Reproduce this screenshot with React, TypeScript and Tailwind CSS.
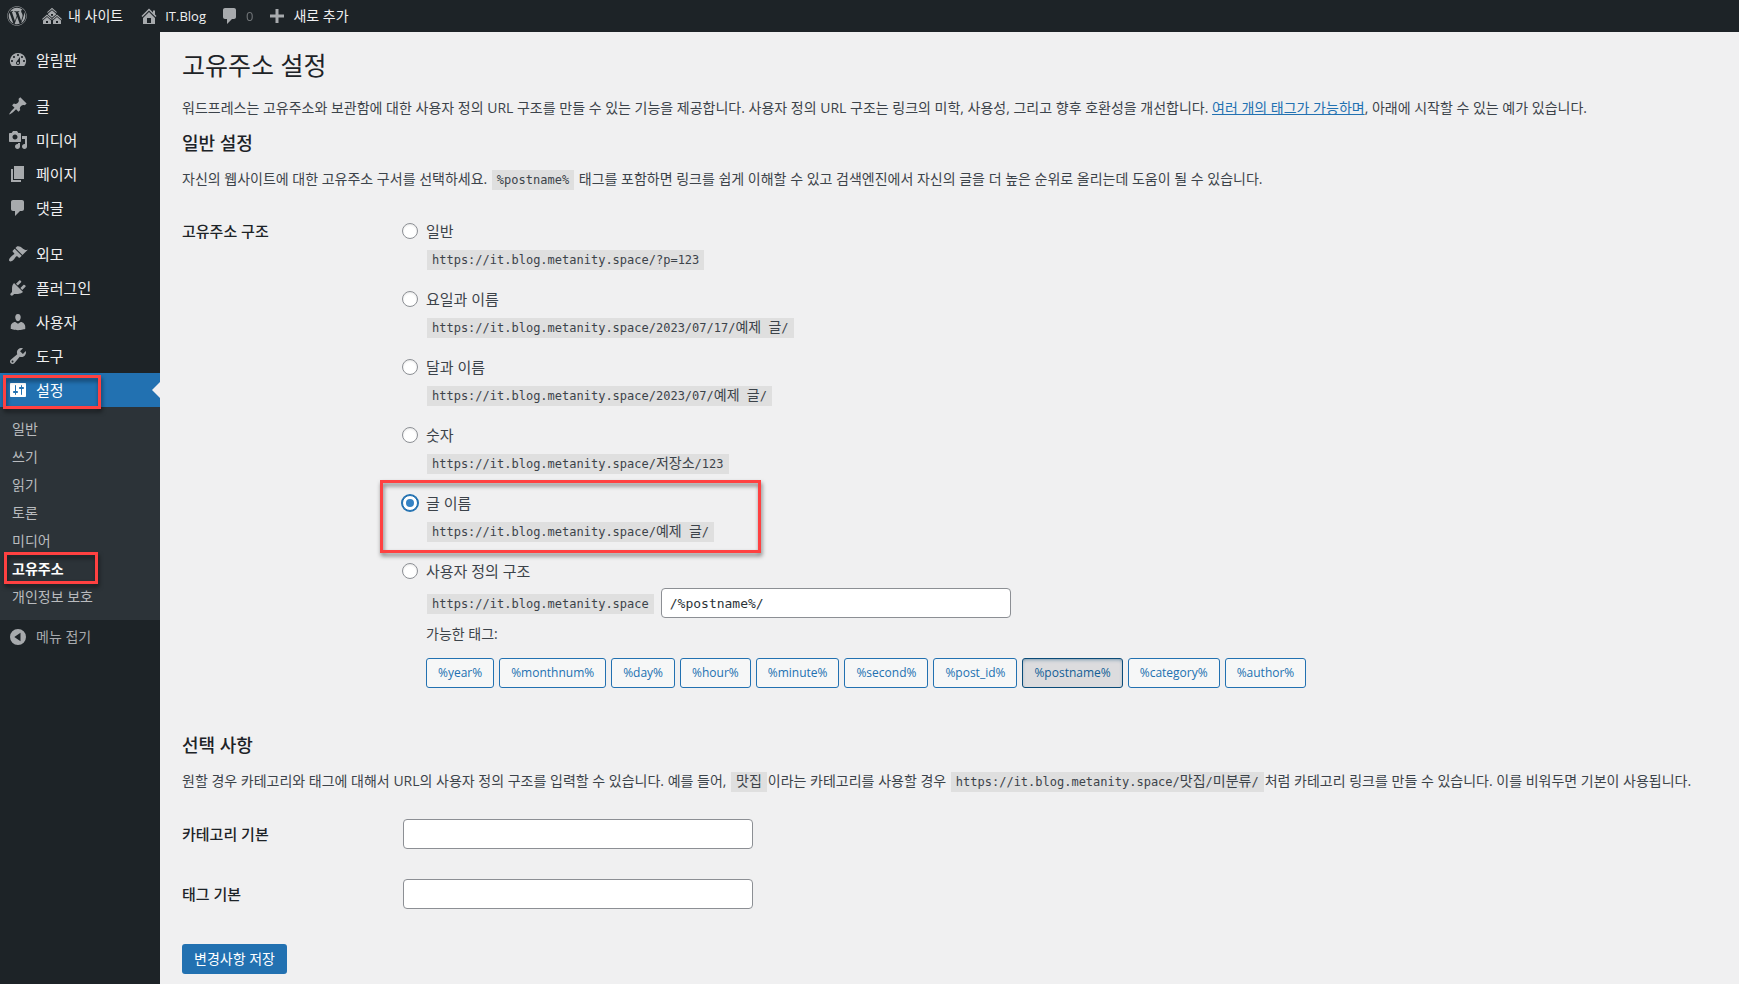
import React from "react";
import { FaWordpress } from "react-icons/fa";

const icons = {
  dashboard:
    "M3.76 16h12.48A7.998 7.998 0 0 0 10 3a7.998 7.998 0 0 0-6.24 13zM10 4c.55 0 1 .45 1 1s-.45 1-1 1-1-.45-1-1 .45-1 1-1zM6 6c.55 0 1 .45 1 1s-.45 1-1 1-1-.45-1-1 .45-1 1-1zm8 0c.55 0 1 .45 1 1s-.45 1-1 1-1-.45-1-1 .45-1 1-1zm-5.37 5.55L12 7v6c0 1.1-.9 2-2 2s-2-.9-2-2c0-.57.24-1.08.63-1.45zM4 10c.55 0 1 .45 1 1s-.45 1-1 1-1-.45-1-1 .45-1 1-1zm12 0c.55 0 1 .45 1 1s-.45 1-1 1-1-.45-1-1 .45-1 1-1zm-5 3c0-.55-.45-1-1-1s-1 .45-1 1 .45 1 1 1 1-.45 1-1z",
  post: "M10.44 3.02l1.82-1.82 6.36 6.35-1.83 1.82c-1.05-.68-2.48-.57-3.41.36l-.75.75c-.92.93-1.04 2.35-.35 3.41l-1.83 1.82-2.41-2.41-2.8 2.79c-.42.42-3.38 2.71-3.8 2.29s1.86-3.39 2.28-3.81l2.79-2.79L4.1 9.36l1.83-1.82c1.05.69 2.48.57 3.4-.36l.75-.75c.93-.92 1.05-2.35.36-3.41z",
  media:
    "M13 11V4c0-.55-.45-1-1-1h-1.67L9 1H5L3.67 3H2c-.55 0-1 .45-1 1v7c0 .55.45 1 1 1h10c.55 0 1-.45 1-1zM7 4.5c1.38 0 2.5 1.12 2.5 2.5S8.38 9.5 7 9.5 4.5 8.38 4.5 7 5.62 4.5 7 4.5zM14 6h5v10.5c0 1.38-1.12 2.5-2.5 2.5S14 17.88 14 16.5s1.12-2.5 2.5-2.5c.17 0 .34.02.5.05V9h-3V6zm-4 8.05V13h2v3.5c0 1.38-1.12 2.5-2.5 2.5S7 17.88 7 16.5 8.12 14 9.5 14c.17 0 .34.02.5.05z",
  page: "M6 15V2h10v13H6zm-1 1h8v2H3V5h2v11z",
  comments:
    "M5 2h9c1.1 0 2 .9 2 2v7c0 1.1-.9 2-2 2h-2l-5 5v-5H5c-1.1 0-2-.9-2-2V4c0-1.1.9-2 2-2z",
  appearance:
    "M14.48 11.06L7.41 3.99l1.5-1.5c.5-.56 2.3-.47 3.51.32 1.21.8 1.43 1.28 2.91 2.1 1.18.64 2.45 1.26 4.45.85zm-.71.71L6.7 4.7 4.93 6.47c-.39.39-.39 1.02 0 1.41l1.06 1.06c.39.39.39 1.03 0 1.42-.6.6-1.43 1.11-2.21 1.69-.35.26-.7.53-1.01.84C1.43 14.23.4 16.08 1.4 17.07c.99 1 2.84-.03 4.18-1.36.31-.31.58-.66.85-1.02.57-.78 1.08-1.61 1.69-2.21.39-.39 1.02-.39 1.41 0l1.06 1.06c.39.39 1.02.39 1.41 0z",
  plugins:
    "M13.11 4.36L9.87 7.6 8 5.73l3.24-3.24c.35-.34 1.05-.2 1.56.32.52.51.66 1.21.31 1.55zm-8 1.77l.91-1.12 9.01 9.01-1.19.84c-.71.71-2.63 1.16-3.82 1.16H6.14L4.9 17.26c-.59.59-1.54.59-2.12 0-.59-.58-.59-1.53 0-2.12l1.24-1.24v-3.88c0-1.13.4-3.19 1.09-3.89zm7.26 3.97l3.24-3.24c.34-.35 1.04-.21 1.55.31.52.51.66 1.21.31 1.55l-3.24 3.25z",
  users:
    "M10 9.25c-2.27 0-2.73-3.44-2.73-3.44C7 4.02 7.82 2 9.97 2c2.16 0 2.98 2.02 2.71 3.81 0 0-.41 3.44-2.68 3.44zm0 2.57L12.72 10c2.39 0 4.52 2.33 4.52 4.53v2.49s-3.65 1.13-7.24 1.13c-3.65 0-7.24-1.13-7.24-1.13v-2.49c0-2.25 1.94-4.48 4.47-4.48z",
  tools:
    "M16.68 9.77c-1.34 1.34-3.3 1.67-4.95.99l-5.41 6.52c-.99.99-2.59.99-3.58 0s-.99-2.59 0-3.57l6.52-5.42c-.68-1.65-.35-3.61.99-4.95 1.28-1.28 3.12-1.62 4.72-1.06l-2.89 2.89 2.82 2.82 2.86-2.87c.53 1.58.18 3.39-1.08 4.65zM3.81 16.21c.4.39 1.04.39 1.43 0 .4-.4.4-1.04 0-1.43-.39-.4-1.03-.4-1.43 0-.39.39-.39 1.03 0 1.43z",
  settings:
    "M18 16V4c0-.55-.45-1-1-1H3c-.55 0-1 .45-1 1v12c0 .55.45 1 1 1h14c.55 0 1-.45 1-1zM8 11h1c.55 0 1 .45 1 1s-.45 1-1 1H8v1.5c0 .28-.22.5-.5.5s-.5-.22-.5-.5V13H6c-.55 0-1-.45-1-1s.45-1 1-1h1V5.5c0-.28.22-.5.5-.5s.5.22.5.5V11zm5-2h-1c-.55 0-1-.45-1-1s.45-1 1-1h1V5.5c0-.28.22-.5.5-.5s.5.22.5.5V7h1c.55 0 1 .45 1 1s-.45 1-1 1h-1v5.5c0 .28-.22.5-.5.5s-.5-.22-.5-.5V9z",
  home: "M16 8.5l1.53 1.53-1.06 1.06L10 4.6l-6.47 6.49-1.06-1.06L10 2.5l4 4v-2h2v4zm-6-2.46l6 5.99V18H4v-5.97zM12 17v-5H8v5h4z",
  multisite:
    "M14.27 6.87L10 3.14 5.73 6.87 5 6.14l5-4.38 5 4.38zM14 8.42l-4.05 3.43L6 8.38v-.74l4-3.5 4 3.5v.78zM11 9.7V8H9v1.7h2zm-1.73 4.03L5 10 .73 13.73 0 13l5-4.38L10 13zm10 0L15 10l-4.27 3.73L10 13l5-4.38L20 13zM5 11l4 3.5V18H1v-3.5zm10 0l4 3.5V18h-8v-3.5zm-9 6v-2H4v2h2zm10 0v-2h-2v2h2z",
  plus: "M17 8.5v3h-5.5V17h-3v-5.5H3v-3h5.5V3h3v5.5H17z",
  collapse:
    "M10 2a8 8 0 1 0 0 16a8 8 0 1 0 0-16zM12.5 5.8v8.4L6.3 10z",
};

type IconName = keyof typeof icons;

const Icon = ({ name, className = "" }: { name: IconName; className?: string }) => (
  <svg viewBox="0 0 20 20" className={`h-5 w-5 shrink-0 fill-current ${className}`} aria-hidden="true">
    <path fillRule="evenodd" d={icons[name]} />
  </svg>
);

const menuGroups: { icon: IconName; label: string }[][] = [
  [{ icon: "dashboard", label: "알림판" }],
  [
    { icon: "post", label: "글" },
    { icon: "media", label: "미디어" },
    { icon: "page", label: "페이지" },
    { icon: "comments", label: "댓글" },
  ],
  [
    { icon: "appearance", label: "외모" },
    { icon: "plugins", label: "플러그인" },
    { icon: "users", label: "사용자" },
    { icon: "tools", label: "도구" },
    { icon: "settings", label: "설정" },
  ],
];

const submenu = ["일반", "쓰기", "읽기", "토론", "미디어", "고유주소", "개인정보 보호"];

const structures = [
  { id: "plain", label: "일반", url: "https://it.blog.metanity.space/?p=123" },
  { id: "day", label: "요일과 이름", url: "https://it.blog.metanity.space/2023/07/17/예제 글/" },
  { id: "month", label: "달과 이름", url: "https://it.blog.metanity.space/2023/07/예제 글/" },
  { id: "numeric", label: "숫자", url: "https://it.blog.metanity.space/저장소/123" },
  { id: "postname", label: "글 이름", url: "https://it.blog.metanity.space/예제 글/" },
];

const tags = [
  "%year%",
  "%monthnum%",
  "%day%",
  "%hour%",
  "%minute%",
  "%second%",
  "%post_id%",
  "%postname%",
  "%category%",
  "%author%",
];

const Highlight = ({ className }: { className: string }) => (
  <div
    className={`pointer-events-none absolute border-3 border-[#ff4141] drop-shadow-[1px_3px_2px_rgba(0,0,0,0.5)] ${className}`}
  />
);

// Hangul is set a little larger than the Latin part of a URL
const Code = ({ children }: { children: string }) => (
  <code className="mx-px bg-[#dfdfdf] px-[5px] py-[3px] font-['DejaVu_Sans_Mono','Noto_Sans_CJK_KR',monospace] text-[12px] leading-none">
    {children.split(/([가-힣]+)/).map((part, index) =>
      index % 2 ? (
        <span key={index} className="text-[14px]">
          {part}
        </span>
      ) : (
        part
      )
    )}
  </code>
);

const Radio = ({ id, checked = false }: { id: string; checked?: boolean }) => (
  <input
    type="radio"
    name="structure"
    id={id}
    defaultChecked={checked}
    className="grid h-4 w-4 shrink-0 appearance-none place-content-center rounded-full border border-[#8c8f94] bg-white shadow-[inset_0_1px_2px_rgba(0,0,0,0.1)] before:h-2 before:w-2 before:rounded-full checked:border-[#2271b1] checked:shadow-[0_0_0_1px_#2271b1] checked:before:bg-[#3582c4]"
  />
);

const inputClass =
  "h-[30px] w-[350px] rounded-sm border border-[#8c8f94] bg-white px-2 text-[#2c3338]";

const AdminBar = () => (
  <header className="flex h-8 items-center bg-[#1d2327] pl-[7px] text-[14px] text-[#f0f0f1]">
    <a href="#about" aria-label="WordPress" className="mr-[15px] text-[#a7aaad]">
      <FaWordpress className="h-5 w-5" />
    </a>
    <a href="#sites" className="mr-4 flex items-center gap-[6px]">
      <Icon name="multisite" className="text-[#a7aaad]" />내 사이트
    </a>
    <a href="#blog" className="mr-[14px] flex items-center gap-[6px] text-[13px]">
      <Icon name="home" className="text-[#a7aaad]" />
      IT.Blog
    </a>
    <a href="#comments" className="mr-[14px] flex items-center gap-[6px] text-[13px] text-[#a7aaad]">
      <Icon name="comments" />
      <span className="opacity-60">0</span>
    </a>
    <a href="#new" className="flex items-center gap-[6px]">
      <Icon name="plus" className="text-[#a7aaad]" />
      새로 추가
    </a>
  </header>
);

const Sidebar = () => (
  <nav className="w-40 shrink-0 bg-[#1d2327] pt-[11px] text-[#f0f0f1]">
    <div className="flex flex-col gap-3">
      {menuGroups.map((group, index) => (
        <ul key={index}>
          {group.map(({ icon, label }) => {
            const active = label === "설정";
            return (
              <li key={label} className={active ? "relative bg-[#2271b1] text-white" : ""}>
                <a href={`#${icon}`} className="flex h-[34px] items-center gap-2 pl-2 text-[15px]">
                  <Icon name={icon} className={active ? "" : "text-[#a7aaad]"} />
                  {label}
                </a>
                {active && (
                  <>
                    <span className="absolute top-1/2 right-0 -mt-2 border-8 border-l-0 border-transparent border-r-[#f0f0f1]" />
                    <Highlight className="top-[2px] left-[3px] h-[34px] w-[98px]" />
                  </>
                )}
              </li>
            );
          })}
        </ul>
      ))}
    </div>
    <ul className="bg-[#2c3338] pt-2 pb-[9px] text-[14px]">
      {submenu.map((label) => {
        const current = label === "고유주소";
        return (
          <li key={label} className="relative">
            <a
              href={`#${label}`}
              className={`flex h-7 items-center pl-3 ${current ? "font-semibold text-white" : "text-[#b9bbbe]"}`}
            >
              {label}
            </a>
            {current && <Highlight className="-top-[3px] left-1 h-8 w-[94px]" />}
          </li>
        );
      })}
    </ul>
    <button type="button" className="flex h-[34px] items-center gap-2 pl-2 text-[14px] text-[#a7aaad]">
      <Icon name="collapse" />
      메뉴 접기
    </button>
  </nav>
);

const App = () => {
  return (
    <div className="flex min-h-screen flex-col bg-[#f0f0f1] font-['Open_Sans','Noto_Sans_CJK_KR',sans-serif] text-[14px] leading-5 text-[#3c434a]">
      <AdminBar />
      <div className="flex grow">
        <Sidebar />
        <main className="min-w-0 grow pt-[17px] pr-5 pb-[10px] pl-[22px]">
          <h1 className="text-[25px] leading-8 text-[#1d2327]">고유주소 설정</h1>
          <p className="mt-[17px]">
            워드프레스는 고유주소와 보관함에 대한 사용자 정의 URL 구조를 만들 수 있는 기능을 제공합니다. 사용자 정의 URL
            구조는 링크의 미학, 사용성, 그리고 향후 호환성을 개선합니다.{" "}
            <a href="#tags" className="text-[#2271b1] underline">
              여러 개의 태그가 가능하며
            </a>
            , 아래에 시작할 수 있는 예가 있습니다.
          </p>
          <h2 className="mt-[13px] text-[18px] leading-6 font-medium text-[#1d2327]">일반 설정</h2>
          <p className="mt-[14px]">
            자신의 웹사이트에 대한 고유주소 구서를 선택하세요. <Code>%postname%</Code> 태그를 포함하면 링크를 쉽게 이해할 수
            있고 검색엔진에서 자신의 글을 더 높은 순위로 올리는데 도움이 될 수 있습니다.
          </p>

          <form onSubmit={(e) => e.preventDefault()}>
            <fieldset className="mt-8 grid grid-cols-[220px_1fr]">
              <div className="text-[15px] font-medium text-[#1d2327]">고유주소 구조</div>
              <div>
                {structures.map(({ id, label, url }) => (
                  <div key={id} className="relative mb-5">
                    <div className="flex items-center gap-2 text-[15px]">
                      <Radio id={id} checked={id === "postname"} />
                      <label htmlFor={id}>{label}</label>
                    </div>
                    <div className="mt-2 pl-6">
                      <Code>{url}</Code>
                    </div>
                    {id === "postname" && <Highlight className="-top-[13px] -left-[22px] h-[73px] w-[381px]" />}
                  </div>
                ))}
                <div className="flex items-center gap-2 text-[15px]">
                  <Radio id="custom" />
                  <label htmlFor="custom">사용자 정의 구조</label>
                </div>
                <div className="pl-6">
                  <div className="mt-[7px] flex items-center gap-[6px]">
                    <span>
                      <Code>https://it.blog.metanity.space</Code>
                    </span>
                    <input
                      type="text"
                      aria-label="사용자 정의 구조"
                      defaultValue="/%postname%/"
                      className={`${inputClass} font-['DejaVu_Sans_Mono',monospace] text-[13px]`}
                    />
                  </div>
                  <p className="mt-[6px]">가능한 태그:</p>
                  <div className="mt-[14px] flex flex-wrap gap-[5px]">
                    {tags.map((tag) => (
                      <button
                        key={tag}
                        type="button"
                        className={`h-[30px] rounded-[3px] border px-[11px] text-[12px] ${
                          tag === "%postname%"
                            ? "border-[#0a4b78] bg-[#dcdcde] text-[#135e96] shadow-[inset_0_2px_5px_-3px_#0a4b78]"
                            : "border-[#2271b1] bg-[#f6f7f7] text-[#2271b1]"
                        }`}
                      >
                        {tag}
                      </button>
                    ))}
                  </div>
                </div>
              </div>
            </fieldset>

            <h2 className="mt-[45px] text-[18px] leading-6 font-medium text-[#1d2327]">선택 사항</h2>
            <p className="mt-[14px]">
              원할 경우 카테고리와 태그에 대해서 URL의 사용자 정의 구조를 입력할 수 있습니다. 예를 들어, <Code>맛집</Code>
              이라는 카테고리를 사용할 경우 <Code>https://it.blog.metanity.space/맛집/미분류/</Code>처럼 카테고리 링크를 만들
              수 있습니다. 이를 비워두면 기본이 사용됩니다.
            </p>

            <div className="mt-7 grid grid-cols-[221px_1fr] items-center gap-y-[30px]">
              <label htmlFor="category_base" className="text-[15px] font-medium text-[#1d2327]">
                카테고리 기본
              </label>
              <input id="category_base" type="text" className={inputClass} />
              <label htmlFor="tag_base" className="text-[15px] font-medium text-[#1d2327]">
                태그 기본
              </label>
              <input id="tag_base" type="text" className={inputClass} />
            </div>

            <button
              type="submit"
              className="mt-[35px] block h-[30px] rounded-[3px] bg-[#2271b1] px-3 text-[14px] text-white"
            >
              변경사항 저장
            </button>
          </form>
        </main>
      </div>
    </div>
  );
};

export default App;
